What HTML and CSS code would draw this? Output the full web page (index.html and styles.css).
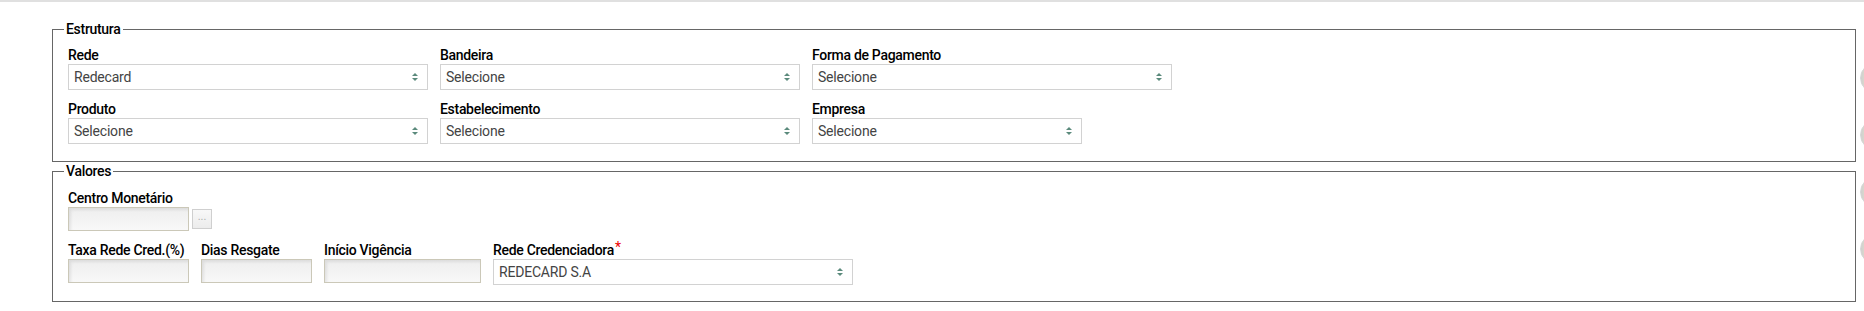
FILE: index.html
```html
<!DOCTYPE html>
<html lang="pt-BR">
<head>
  <meta charset="UTF-8">
  <meta name="viewport" content="width=device-width, initial-scale=1.0">
  <title>Rede Credenciadora</title>
  <link rel="stylesheet" href="styles.css">
</head>
<body>
  <div class="page">
    <fieldset class="group">
      <legend>Estrutura</legend>
      <div class="row">
        <div class="field">
          <label for="rede">Rede</label>
          <span class="select w-360"><select id="rede"><option>Redecard</option></select></span>
        </div>
        <div class="field">
          <label for="bandeira">Bandeira</label>
          <span class="select w-360"><select id="bandeira"><option>Selecione</option></select></span>
        </div>
        <div class="field">
          <label for="forma">Forma de Pagamento</label>
          <span class="select w-360"><select id="forma"><option>Selecione</option></select></span>
        </div>
      </div>
      <div class="row">
        <div class="field">
          <label for="produto">Produto</label>
          <span class="select w-360"><select id="produto"><option>Selecione</option></select></span>
        </div>
        <div class="field">
          <label for="estab">Estabelecimento</label>
          <span class="select w-360"><select id="estab"><option>Selecione</option></select></span>
        </div>
        <div class="field">
          <label for="empresa">Empresa</label>
          <span class="select w-270"><select id="empresa"><option>Selecione</option></select></span>
        </div>
      </div>
    </fieldset>

    <fieldset class="group group-valores">
      <legend>Valores</legend>
      <div class="row">
        <div class="field">
          <label for="centro">Centro Monetário</label>
          <div class="lookup">
            <input type="text" id="centro" class="text w-121">
            <button type="button" class="btn-lookup">...</button>
          </div>
        </div>
      </div>
      <div class="row">
        <div class="field">
          <label for="taxa">Taxa Rede Cred.(%)</label>
          <input type="text" id="taxa" class="text w-121">
        </div>
        <div class="field">
          <label for="dias">Dias Resgate</label>
          <input type="text" id="dias" class="text w-111">
        </div>
        <div class="field">
          <label for="inicio">Início Vigência</label>
          <input type="text" id="inicio" class="text w-157">
        </div>
        <div class="field">
          <label for="credenciadora">Rede Credenciadora<span class="req">*</span></label>
          <span class="select w-360"><select id="credenciadora"><option>REDECARD S.A</option></select></span>
        </div>
      </div>
    </fieldset>
  </div>

  <div class="side-tabs">
    <span></span>
    <span></span>
    <span></span>
    <span></span>
  </div>
</body>
</html>
```

FILE: styles.css
```css
body {
  margin: 0;
  padding: 0;
  font-family: Roboto, "Liberation Sans", sans-serif;
  background-color: #fff;
  color: #000;
}

.page {
  border-top: 2px solid #e0e0e0;
  padding: 19px 8px 0 52px;
}

.group {
  margin: 0 0 1px;
  padding: 8px 15px 17px;
  border: 1px solid #666;
  min-width: 0;
}

.group-valores {
  padding-top: 9px;
  padding-bottom: 16px;
}

.group legend {
  font-size: 14px;
  line-height: 17px;
  font-weight: 500;
  letter-spacing: -0.3px;
  padding: 0 2px;
  margin-left: -4px;
}

.row {
  display: flex;
  gap: 12px;
}

.row + .row {
  margin-top: 10px;
}

.field {
  display: flex;
  flex-direction: column;
}

.field label {
  display: block;
  font-size: 14px;
  line-height: 18px;
  font-weight: 500;
  letter-spacing: -0.3px;
  color: #000;
}

.req {
  color: #e00;
  font-weight: 400;
  position: relative;
  top: -3px;
  margin-left: 1px;
}

/* select com setas proprias */
.select {
  position: relative;
  display: block;
}

.select select {
  appearance: none;
  -webkit-appearance: none;
  width: 100%;
  height: 26px;
  margin: 0;
  padding: 0 22px 0 5px;
  border: 1px solid #d2d2d2;
  border-radius: 0;
  background-color: #fff;
  font-family: Roboto, "Liberation Sans", sans-serif;
  font-size: 14px;
  letter-spacing: -0.2px;
  color: #444;
}

.select::before,
.select::after {
  content: "";
  position: absolute;
  right: 10px;
  border-left: 3px solid transparent;
  border-right: 3px solid transparent;
}

.select::before {
  top: 9px;
  border-bottom: 3px solid #5b8a7c;
}

.select::after {
  top: 14px;
  border-top: 3px solid #5b8a7c;
}

.w-360 { width: 360px; }
.w-270 { width: 270px; }
.w-121 { width: 121px; }
.w-111 { width: 111px; }
.w-157 { width: 157px; }

.text {
  box-sizing: border-box;
  height: 24px;
  margin: 0;
  padding: 0 4px;
  border: 1px solid #cbc8b8;
  background: linear-gradient(#eeeeee, #f8f8f8);
  box-shadow: inset 2px 2px 3px rgba(0, 0, 0, 0.08);
  font-family: Roboto, "Liberation Sans", sans-serif;
  font-size: 14px;
}

.lookup {
  display: flex;
  align-items: center;
  gap: 3px;
}

.btn-lookup {
  width: 20px;
  height: 20px;
  padding: 0 0 4px;
  border: 1px solid #cfcfcf;
  background: linear-gradient(#f8f8f8, #ececec);
  color: #aaa;
  font-size: 10px;
  line-height: 10px;
  letter-spacing: 0;
  cursor: pointer;
}

/* abas flutuantes cortadas na borda direita */
.side-tabs {
  position: fixed;
  top: 63px;
  right: -26px;
  display: flex;
  flex-direction: column;
  gap: 27px;
}

.side-tabs span {
  display: block;
  width: 28px;
  height: 28px;
  border-radius: 50%;
  border: 1px solid #d6d6d6;
  background: linear-gradient(to right, #cfcfcf, #e9e5c8 30%, #f6f6f2);
}
```
